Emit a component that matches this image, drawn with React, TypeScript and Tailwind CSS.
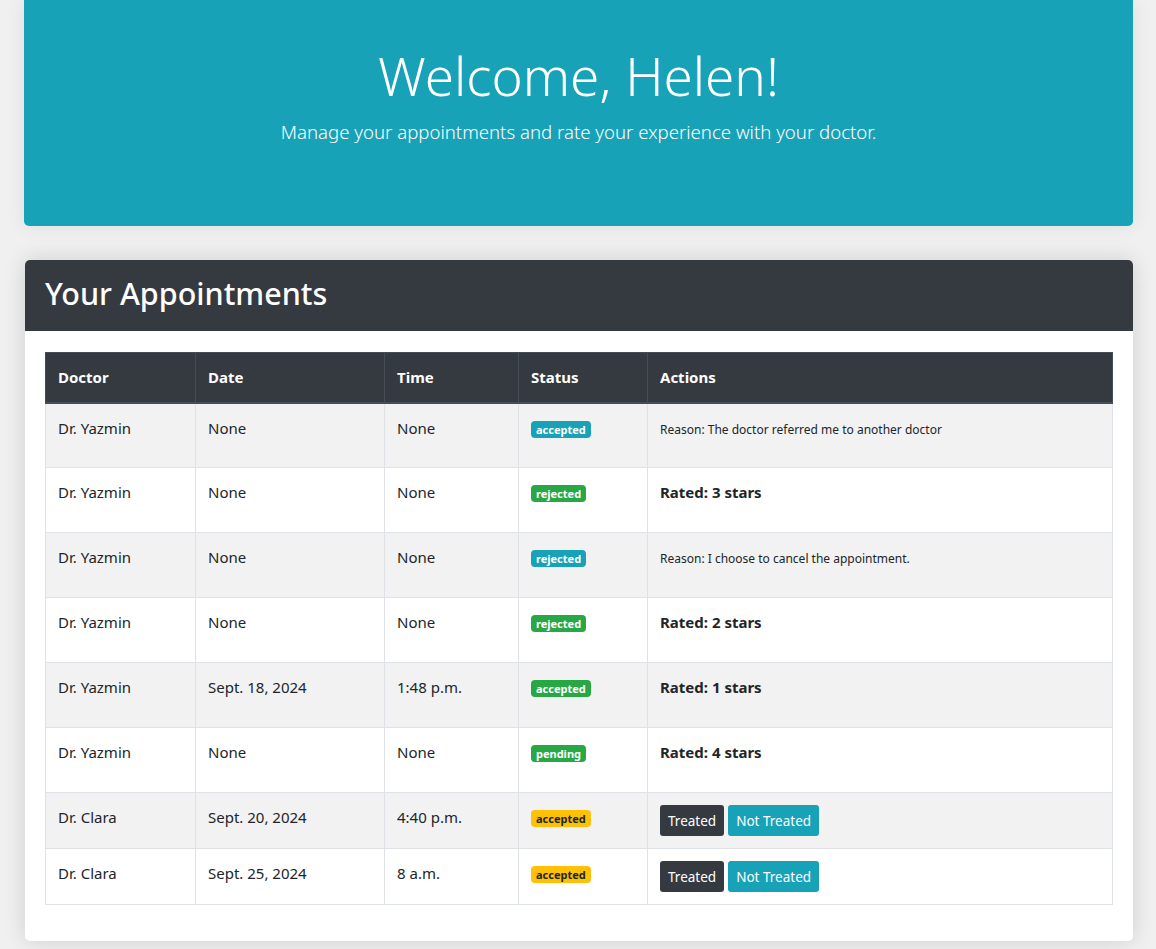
import React from "react";

type Row = {
  doctor: string;
  date: string;
  time: string;
  status: string;
  badge: "info" | "success" | "warning";
  action: { kind: "reason"; text: string } | { kind: "rated"; stars: number } | { kind: "buttons" };
};

const rows: Row[] = [
  { doctor: "Dr. Yazmin", date: "None", time: "None", status: "accepted", badge: "info", action: { kind: "reason", text: "Reason: The doctor referred me to another doctor" } },
  { doctor: "Dr. Yazmin", date: "None", time: "None", status: "rejected", badge: "success", action: { kind: "rated", stars: 3 } },
  { doctor: "Dr. Yazmin", date: "None", time: "None", status: "rejected", badge: "info", action: { kind: "reason", text: "Reason: I choose to cancel the appointment." } },
  { doctor: "Dr. Yazmin", date: "None", time: "None", status: "rejected", badge: "success", action: { kind: "rated", stars: 2 } },
  { doctor: "Dr. Yazmin", date: "Sept. 18, 2024", time: "1:48 p.m.", status: "accepted", badge: "success", action: { kind: "rated", stars: 1 } },
  { doctor: "Dr. Yazmin", date: "None", time: "None", status: "pending", badge: "success", action: { kind: "rated", stars: 4 } },
  { doctor: "Dr. Clara", date: "Sept. 20, 2024", time: "4:40 p.m.", status: "accepted", badge: "warning", action: { kind: "buttons" } },
  { doctor: "Dr. Clara", date: "Sept. 25, 2024", time: "8 a.m.", status: "accepted", badge: "warning", action: { kind: "buttons" } },
];

function Badge({ kind, text }: { kind: Row["badge"]; text: string }) {
  const cls =
    kind === "info"
      ? "bg-[#17a2b8] text-white"
      : kind === "success"
      ? "bg-[#28a745] text-white"
      : "bg-[#ffc107] text-[#212529]";
  return (
    <span className={`inline-block rounded-[4px] px-[5px] py-[3px] text-[11px] font-bold leading-none ${cls}`}>
      {text}
    </span>
  );
}

export default function App() {
  return (
    <div
      className="min-h-[949px] bg-[#f0f0f0] pl-6 pr-[23px] pb-2 text-[#212529]"
      style={{ fontFamily: '"Noto Sans", "Open Sans", sans-serif' }}
    >
      <div className="flex h-[226px] flex-col items-center rounded-b-[5px] bg-[#17a2b8] pt-[44px] text-white shadow-[0_0_20px_rgba(0,0,0,0.08)]">
        <h1 className="text-[53px] font-light leading-[1.2]">Welcome, Helen!</h1>
        <p className="mt-[10px] text-[18.6px] font-light leading-[1.5]">
          Manage your appointments and rate your experience with your doctor.
        </p>
      </div>

      <div className="ml-px mt-[34px] overflow-hidden rounded-[5px] bg-white shadow-[0_0_22px_rgba(0,0,0,0.14)]">
        <div className="flex h-[71px] items-center bg-[#343a40] px-5 pb-[5px]">
          <h2 className="text-[30.5px] font-medium leading-[1.2] text-white">Your Appointments</h2>
        </div>
        <div className="px-5 pb-[36px] pt-[21px]">
          <table className="w-full border-collapse text-[15px]">
            <thead>
              <tr className="h-[50px] bg-[#343a40] text-white">
                <th className="w-[150px] border border-[#454d55] border-b-2 px-3 text-left font-bold">Doctor</th>
                <th className="w-[189px] border border-[#454d55] border-b-2 px-3 text-left font-bold">Date</th>
                <th className="w-[134px] border border-[#454d55] border-b-2 px-3 text-left font-bold">Time</th>
                <th className="w-[129px] border border-[#454d55] border-b-2 px-3 text-left font-bold">Status</th>
                <th className="border border-[#454d55] border-b-2 px-3 text-left font-bold">Actions</th>
              </tr>
            </thead>
            <tbody>
              {rows.map((r, i) => {
                const btn = r.action.kind === "buttons";
                return (
                  <tr key={i} className={`${btn ? "h-[56px]" : "h-[65px]"} ${i % 2 === 0 ? "bg-[#f2f2f2]" : "bg-white"}`}>
                    <td className="border border-[#dee2e6] px-3 pt-[12px] align-top leading-6">{r.doctor}</td>
                    <td className="border border-[#dee2e6] px-3 pt-[12px] align-top leading-6">{r.date}</td>
                    <td className="border border-[#dee2e6] px-3 pt-[12px] align-top leading-6">{r.time}</td>
                    <td className="border border-[#dee2e6] px-3 pt-[12px] align-top leading-6">
                      <Badge kind={r.badge} text={r.status} />
                    </td>
                    <td className="border border-[#dee2e6] px-3 pt-[12px] align-top leading-6">
                      {r.action.kind === "reason" && <span className="text-[12px]">{r.action.text}</span>}
                      {r.action.kind === "rated" && <strong className="font-bold">Rated: {r.action.stars} stars</strong>}
                      {r.action.kind === "buttons" && (
                        <div className="flex gap-[4px] pb-[11px]">
                          <button className="h-[31px] rounded-[3px] bg-[#343a40] px-[8px] text-[13.5px] text-white">Treated</button>
                          <button className="h-[31px] rounded-[3px] bg-[#17a2b8] px-[8px] text-[13.5px] text-white">Not Treated</button>
                        </div>
                      )}
                    </td>
                  </tr>
                );
              })}
            </tbody>
          </table>
        </div>
      </div>
    </div>
  );
}
